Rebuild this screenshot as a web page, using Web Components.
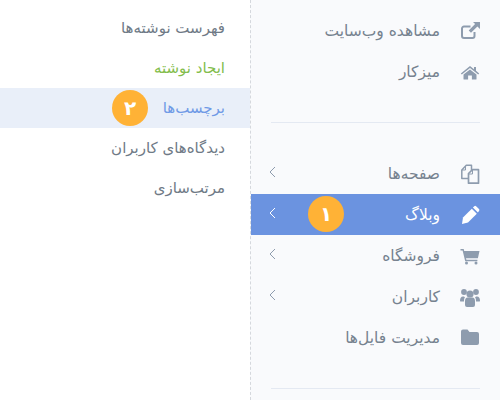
<!DOCTYPE html>
<html lang="fa">
<head>
<meta charset="utf-8">
<title>menu</title>
<style>
  html, body { margin: 0; height: 100%; overflow: hidden; }
  body { font-family: "DejaVu Sans", "Noto Sans", sans-serif; }
</style>
</head>
<body>
<admin-layout>
  <side-menu>
    <menu-item icon="external">مشاهده وب‌سایت</menu-item>
    <menu-item icon="home">میزکار</menu-item>
    <menu-divider></menu-divider>
    <menu-item icon="files" arrow>صفحه‌ها</menu-item>
    <menu-item icon="pencil" arrow active>وبلاگ<step-badge style="--badge-left: 57px">۱</step-badge></menu-item>
    <menu-item icon="cart" arrow>فروشگاه</menu-item>
    <menu-item icon="users" arrow>کاربران</menu-item>
    <menu-item icon="folder">مدیریت فایل‌ها</menu-item>
    <menu-divider></menu-divider>
  </side-menu>
  <sub-menu>
    <sub-item>فهرست نوشته‌ها</sub-item>
    <sub-item kind="new">ایجاد نوشته</sub-item>
    <sub-item kind="current">برچسب‌ها<step-badge style="--badge-left: 112px">۲</step-badge></sub-item>
    <sub-item>دیدگاه‌های کاربران</sub-item>
    <sub-item>مرتب‌سازی</sub-item>
  </sub-menu>
</admin-layout>

<script>
const ICONS = {
  external: `<path d="M14.500 11v4a2 2 0 0 1-2 2H4a2 2 0 0 1-2-2V7.500a2 2 0 0 1 2-2h6.500" fill="none" stroke="currentColor" stroke-width="2"/><path d="M13 1h7v7l-2.600-2.600-6.400 6.400-2.300-2.300 6.400-6.400z"/>`,
  home: `<path d="M10 4 .8 11.400l1 1.200L10 6l8.200 6.600 1-1.200-3.200-2.600V5h-2v2.200z"/><path d="M10 7.400 3.500 12.600V17a.6.6 0 0 0 .6.6h4v-4.200h3.800v4.200h4a.6.6 0 0 0 .6-.6v-4.400z"/>`,
  files: `<path d="M8 14.500H1.800V6l4.500-4.800h5.200v5" fill="none" stroke="currentColor" stroke-width="1.500" stroke-linejoin="round"/><path d="M5.500 2v4H2" fill="none" stroke="currentColor" stroke-width="1"/><path d="M8.500 10.500V9.500l4-3.800h6v13.500h-10z" fill="none" stroke="currentColor" stroke-width="1.700" stroke-linejoin="round"/><path d="M12.500 6v4h-4" fill="none" stroke="currentColor" stroke-width="1"/>`,
  pencil: `<path d="M3 12.500 11.800 3.700l5 5L8 17.500l-6 1.500z"/><path d="M12.900 2.600 14.300 1.200a1.300 1.300 0 0 1 1.800 0l2.900 2.900a1.300 1.300 0 0 1 0 1.800l-1.100 1.700z"/>`,
  cart: `<path d="M.5 3h3.200l.5 2H19.500l-1.600 7.200H6l.4 1.600h11v1.400H5.200L2.600 4.400H.5z"/><circle cx="6.500" cy="17" r="1.500"/><circle cx="16" cy="17" r="1.500"/>`,
  users: `<circle cx="4" cy="5" r="2.900"/><circle cx="16" cy="5" r="2.900"/><circle cx="10" cy="7" r="3.600"/><path d="M0 14c0-3 1-4.500 3-4.500 1 0 1.500.4 2 .8-.8 1-1 2.200-1 4.200H1a1 1 0 0 1-1-.5zM20 14c0-3-1-4.500-3-4.500-1 0-1.500.4-2 .8.800 1 1 2.200 1 4.200h3a1 1 0 0 0 1-.5z"/><path d="M5 14c0-2 1-3.400 2.500-3.400h5C14 10.600 15 12 15 14v4a2 2 0 0 1-2 2H7a2 2 0 0 1-2-2z"/>`,
  folder: `<path d="M1 3.500A2 2 0 0 1 3 1.500h4.500l2 2.500H17a2 2 0 0 1 2 2v9a2 2 0 0 1-2 2H3a2 2 0 0 1-2-2z"/>`
};

class AdminLayout extends HTMLElement {
  connectedCallback() {
    this.attachShadow({ mode: 'open' }).innerHTML = `
      <style>
        :host { display: grid; grid-template-columns: 250px 250px; direction: rtl; height: 400px; }
      </style>
      <slot></slot>`;
  }
}

class SideMenu extends HTMLElement {
  connectedCallback() {
    this.attachShadow({ mode: 'open' }).innerHTML = `
      <style>
        :host { display: block; background: #f9fafc; padding-top: 10px; border-left: 1px dashed #d5d8dd; overflow: hidden; }
      </style>
      <slot></slot>`;
  }
}

class MenuDivider extends HTMLElement {
  connectedCallback() {
    this.attachShadow({ mode: 'open' }).innerHTML = `
      <style>
        :host { display: block; height: 1px; margin: 30px 20px; background: #e4e9f2; }
      </style>`;
  }
}

class MenuItem extends HTMLElement {
  connectedCallback() {
    const icon = ICONS[this.getAttribute('icon')] || '';
    const arrow = this.hasAttribute('arrow')
      ? `<svg class="arrow" width="7" height="12" viewBox="0 0 7 12"><path d="M6 1 1 6l5 5" fill="none" stroke="currentColor" stroke-width="1"/></svg>`
      : '';
    this.attachShadow({ mode: 'open' }).innerHTML = `
      <style>
        :host { position: relative; display: flex; align-items: center; gap: 20px; height: 41px; padding: 0 20px 0 18px; color: #76828f; font-size: 15.5px; }
        :host([active]) { background: #6b93e0; color: #fff; }
        .icon { flex: none; width: 20px; height: 20px; color: #8e9cae; fill: currentColor; }
        :host([active]) .icon { color: #fff; }
        .label { white-space: nowrap; }
        .arrow { margin-inline-start: auto; margin-top: -4px; color: #8e9cae; }
        :host([active]) .arrow { color: #fff; }
      </style>
      <svg class="icon" viewBox="0 0 20 20">${icon}</svg>
      <span class="label"><slot></slot></span>
      ${arrow}`;
  }
}

class SubMenu extends HTMLElement {
  connectedCallback() {
    this.attachShadow({ mode: 'open' }).innerHTML = `
      <style>
        :host { display: block; background: #fff; padding-top: 8px; }
      </style>
      <slot></slot>`;
  }
}

class SubItem extends HTMLElement {
  connectedCallback() {
    this.attachShadow({ mode: 'open' }).innerHTML = `
      <style>
        :host { position: relative; display: flex; align-items: center; height: 40px; padding-right: 25px; color: #6f7a86; font-size: 15px; }
        :host([kind="new"]) { color: #83bd4c; }
        :host([kind="current"]) { background: #e9eff9; color: #6f9ae6; }
        span { white-space: nowrap; }
      </style>
      <span><slot></slot></span>`;
  }
}

// badge lies over its row, --badge-left is set where it is used
class StepBadge extends HTMLElement {
  connectedCallback() {
    this.attachShadow({ mode: 'open' }).innerHTML = `
      <style>
        :host { position: absolute; top: 2px; left: var(--badge-left); display: flex; align-items: center; justify-content: center; width: 36px; height: 36px; border-radius: 50%; background: #ffb236; color: #fff; font-size: 20px; font-weight: 700; }
      </style>
      <slot></slot>`;
  }
}

customElements.define('admin-layout', AdminLayout);
customElements.define('side-menu', SideMenu);
customElements.define('menu-divider', MenuDivider);
customElements.define('menu-item', MenuItem);
customElements.define('sub-menu', SubMenu);
customElements.define('sub-item', SubItem);
customElements.define('step-badge', StepBadge);
</script>
</body>
</html>
